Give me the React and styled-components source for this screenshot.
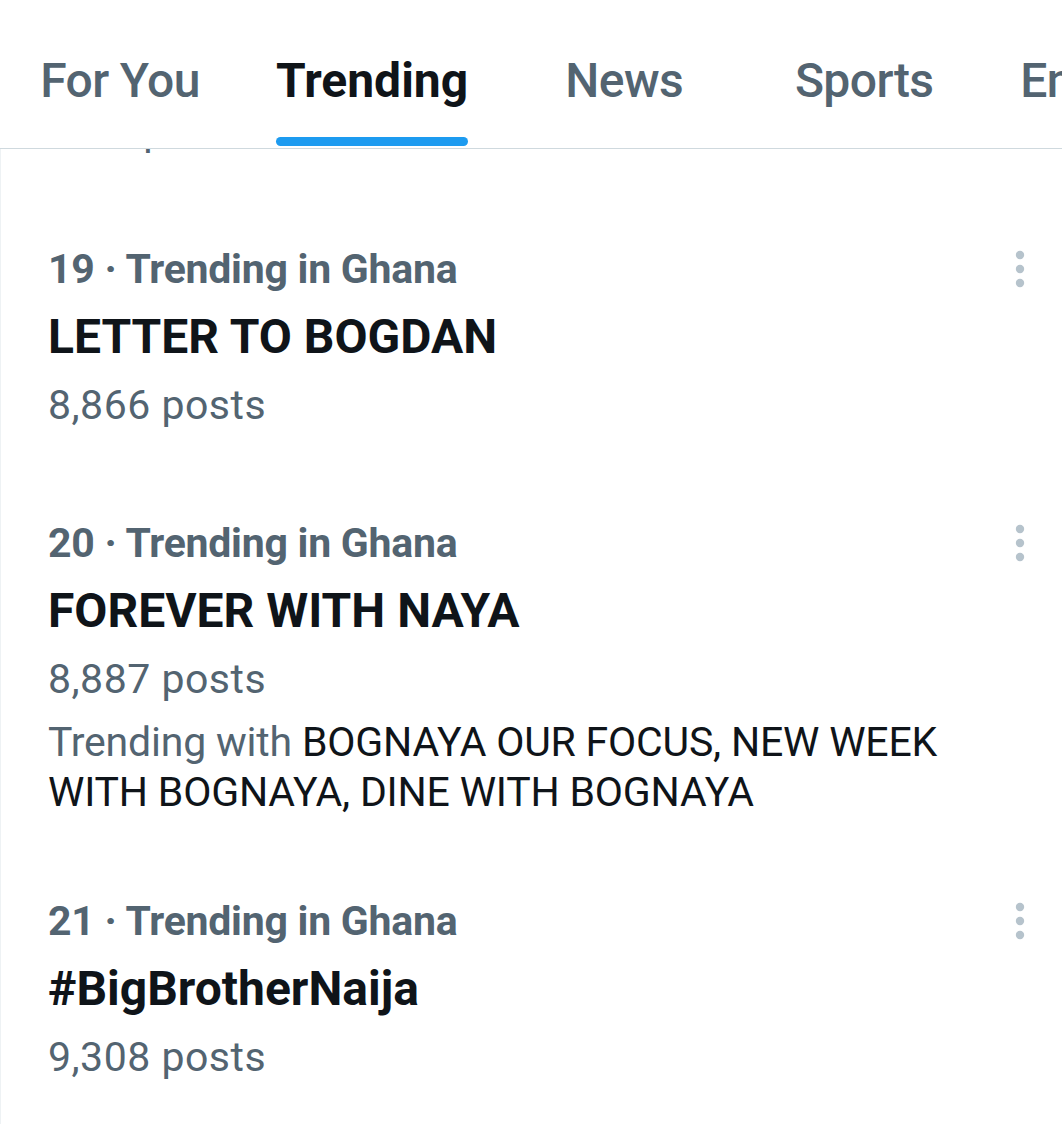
import React, { useLayoutEffect, useRef } from "react";
import styled, { createGlobalStyle } from "styled-components";

const GlobalStyle = createGlobalStyle`
  html, body {
    margin: 0;
    padding: 0;
    background: #ffffff;
  }
  body {
    font-family: Roboto, "Noto Sans", "Liberation Sans", sans-serif;
    -webkit-font-smoothing: antialiased;
  }
  #root {
    height: 100vh;
  }
`;

const Screen = styled.div`
  height: 100vh;
  display: flex;
  flex-direction: column;
  overflow: hidden;
  background: #ffffff;
`;

const TabBar = styled.nav`
  display: flex;
  height: 148px;
  flex-shrink: 0;
  border-bottom: 1px solid #cfd9de;
  overflow: hidden;
`;

const Tab = styled.div`
  flex: 0 0 auto;
  min-width: 240px;
  box-sizing: border-box;
  padding: 57px 36px 0;
  display: flex;
  flex-direction: column;
  align-items: center;
`;

const TabInner = styled.div`
  display: flex;
  flex-direction: column;
`;

const TabLabel = styled.span`
  font-size: 48px;
  line-height: 48px;
  font-weight: ${(p) => (p.$active ? 700 : 500)};
  letter-spacing: ${(p) => (p.$active ? "0" : "-0.6px")};
  color: ${(p) => (p.$active ? "#0f1419" : "#536471")};
  white-space: nowrap;
`;

const Indicator = styled.span`
  height: 9px;
  margin-top: 32px;
  border-radius: 5px;
  background: #1d9bf0;
`;

const Feed = styled.div`
  flex: 1;
  min-height: 0;
  overflow: hidden;
  border-left: 1px solid #eef2f4;
`;

const Trend = styled.article`
  display: flex;
  align-items: flex-start;
  padding: 35px 0 35px 47px;
`;

const TrendBody = styled.div`
  flex: 1;
  min-width: 0;
`;

const Meta = styled.div`
  font-size: 41px;
  line-height: 68px;
  font-weight: 700;
  letter-spacing: -0.25px;
  color: #536471;
  white-space: nowrap;
`;

const Title = styled.div`
  font-size: 48px;
  line-height: 68px;
  font-weight: 700;
  color: #0f1419;
`;

const Count = styled.div`
  font-size: 41px;
  line-height: 68px;
  font-weight: 400;
  letter-spacing: 0.5px;
  color: #536471;
`;

const Related = styled.div`
  margin-top: 4px;
  font-size: 41px;
  line-height: 50px;
  font-weight: 400;
  letter-spacing: -0.2px;
  color: #0f1419;
`;

const RelatedLead = styled.span`
  color: #536471;
`;

const MoreButton = styled.button`
  flex: 0 0 auto;
  width: 40px;
  height: 68px;
  margin: 0 22px 0 0;
  padding: 0;
  border: 0;
  background: transparent;
  display: flex;
  align-items: center;
  justify-content: center;
`;

const MoreIcon = () => (
  <svg width="40" height="68" viewBox="0 0 40 68" aria-hidden="true">
    <circle cx="20" cy="20" r="4.2" fill="#b6c3cc" />
    <circle cx="20" cy="34" r="4.2" fill="#b6c3cc" />
    <circle cx="20" cy="48" r="4.2" fill="#b6c3cc" />
  </svg>
);

const tabs = [
  { label: "For You" },
  { label: "Trending", active: true },
  { label: "News" },
  { label: "Sports" },
  { label: "Entertainment" },
];

const trends = [
  { rank: 18, title: "BOGNAYA", count: "5.8K posts" },
  { rank: 19, title: "LETTER TO BOGDAN", count: "8,866 posts", anchor: true },
  {
    rank: 20,
    title: "FOREVER WITH NAYA",
    count: "8,887 posts",
    related: "BOGNAYA OUR FOCUS, NEW WEEK WITH BOGNAYA, DINE WITH BOGNAYA",
  },
  { rank: 21, title: "#BigBrotherNaija", count: "9,308 posts" },
  { rank: 22, title: "Ghana", count: "12.4K posts" },
];

export default function App() {
  const feedRef = useRef(null);
  const anchorRef = useRef(null);

  useLayoutEffect(() => {
    const feed = feedRef.current;
    const anchor = anchorRef.current;
    if (feed && anchor) {
      feed.scrollTop = anchor.offsetTop - feed.offsetTop - 51;
    }
  }, []);

  return (
    <>
      <GlobalStyle />
      <Screen>
        <TabBar>
          {tabs.map((t) => (
            <Tab key={t.label}>
              <TabInner>
                <TabLabel $active={t.active}>{t.label}</TabLabel>
                {t.active && <Indicator />}
              </TabInner>
            </Tab>
          ))}
        </TabBar>
        <Feed ref={feedRef}>
          {trends.map((t) => (
            <Trend key={t.rank} ref={t.anchor ? anchorRef : undefined}>
              <TrendBody>
                <Meta>{t.rank} · Trending in Ghana</Meta>
                <Title>{t.title}</Title>
                <Count>{t.count}</Count>
                {t.related && (
                  <Related>
                    <RelatedLead>Trending with </RelatedLead>
                    {t.related}
                  </Related>
                )}
              </TrendBody>
              <MoreButton aria-label="More">
                <MoreIcon />
              </MoreButton>
            </Trend>
          ))}
        </Feed>
      </Screen>
    </>
  );
}
